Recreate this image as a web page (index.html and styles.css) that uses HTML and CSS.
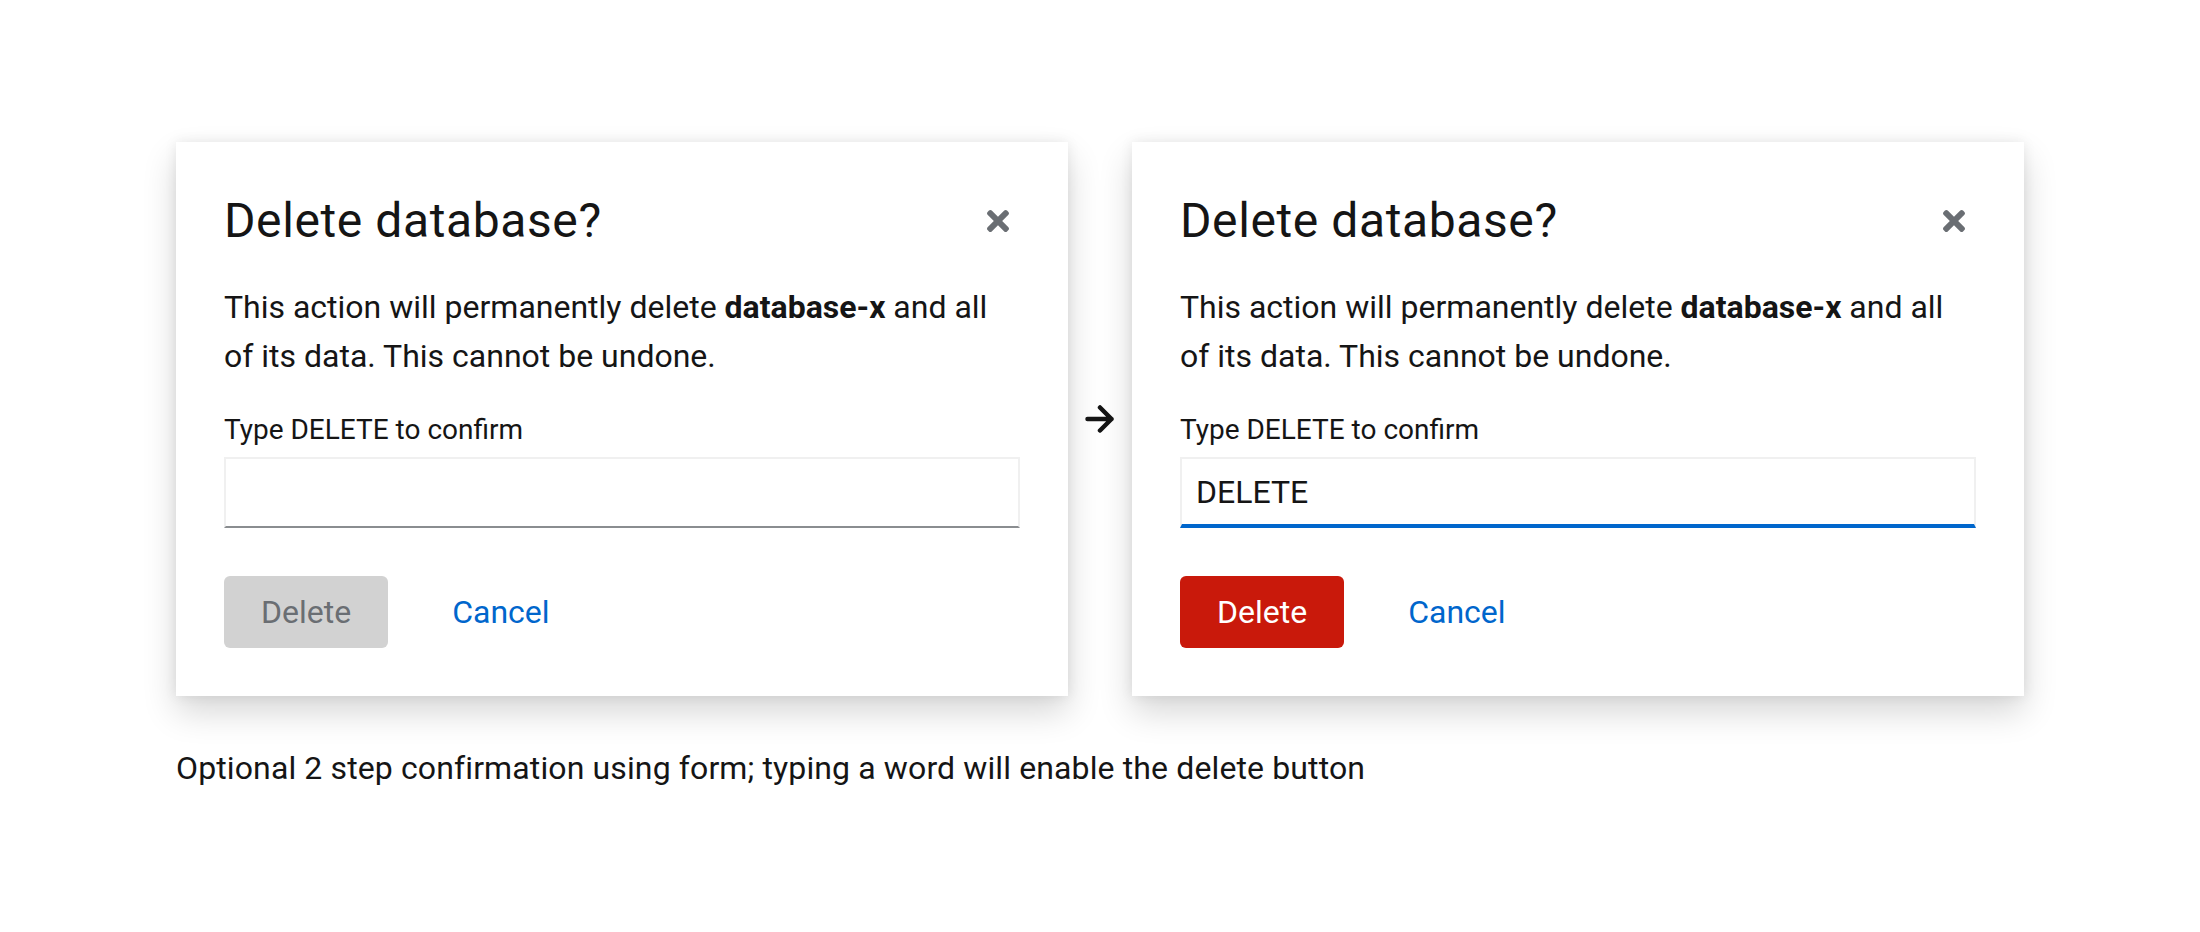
FILE: index.html
```html
<!DOCTYPE html>
<html lang="en">
<head>
<meta charset="utf-8">
<title>Delete database confirmation</title>
<link rel="stylesheet" href="styles.css">
</head>
<body>
<main class="page">
  <div class="row">
    <section class="modal">
      <header class="modal-header">
        <h1 class="modal-title">Delete database?</h1>
        <button class="close" aria-label="Close">
          <svg class="close-icon" viewBox="0 0 352 512" width="22" height="32" aria-hidden="true"><path fill="currentColor" d="M242.72 256l100.07-100.07c12.28-12.28 12.28-32.19 0-44.48l-22.24-22.24c-12.28-12.28-32.19-12.28-44.48 0L176 189.28 75.93 89.21c-12.28-12.28-32.19-12.28-44.48 0L9.21 111.45c-12.28 12.28-12.28 32.19 0 44.48L109.28 256 9.21 356.07c-12.28 12.28-12.28 32.19 0 44.48l22.24 22.24c12.28 12.28 32.2 12.28 44.48 0L176 322.72l100.07 100.07c12.28 12.28 32.2 12.28 44.48 0l22.24-22.24c12.28-12.28 12.28-32.19 0-44.48L242.72 256z"/></svg>
        </button>
      </header>
      <p class="modal-body">This action will permanently delete <b>database-x</b> and all of its data. This cannot be undone.</p>
      <label class="label" for="c1">Type DELETE to confirm</label>
      <input class="input" id="c1" type="text" value="">
      <div class="actions">
        <button class="btn btn-disabled" disabled>Delete</button>
        <button class="btn btn-link">Cancel</button>
      </div>
    </section>
    <div class="arrow">
      <svg viewBox="0 0 30 28" width="30" height="28" aria-hidden="true"><path d="M2.5 14H26.5M15 2.5L26.5 14L15 25.5" fill="none" stroke="#151515" stroke-width="4.5" stroke-linecap="round" stroke-linejoin="round"/></svg>
    </div>
    <section class="modal">
      <header class="modal-header">
        <h1 class="modal-title">Delete database?</h1>
        <button class="close" aria-label="Close">
          <svg class="close-icon" viewBox="0 0 352 512" width="22" height="32" aria-hidden="true"><path fill="currentColor" d="M242.72 256l100.07-100.07c12.28-12.28 12.28-32.19 0-44.48l-22.24-22.24c-12.28-12.28-32.19-12.28-44.48 0L176 189.28 75.93 89.21c-12.28-12.28-32.19-12.28-44.48 0L9.21 111.45c-12.28 12.28-12.28 32.19 0 44.48L109.28 256 9.21 356.07c-12.28 12.28-12.28 32.19 0 44.48l22.24 22.24c12.28 12.28 32.2 12.28 44.48 0L176 322.72l100.07 100.07c12.28 12.28 32.2 12.28 44.48 0l22.24-22.24c12.28-12.28 12.28-32.19 0-44.48L242.72 256z"/></svg>
        </button>
      </header>
      <p class="modal-body">This action will permanently delete <b>database-x</b> and all of its data. This cannot be undone.</p>
      <label class="label" for="c2">Type DELETE to confirm</label>
      <input class="input input-focus" id="c2" type="text" value="DELETE">
      <div class="actions">
        <button class="btn btn-danger">Delete</button>
        <button class="btn btn-link">Cancel</button>
      </div>
    </section>
  </div>
  <p class="caption">Optional 2 step confirmation using form; typing a word will enable the delete button</p>
</main>
</body>
</html>
```

FILE: styles.css
```css
html, body {
  margin: 0;
  padding: 0;
  background: #ffffff;
}

body {
  font-family: Roboto, "Liberation Sans", sans-serif;
  color: #151515;
}

.page {
  padding: 142px 0 0 176px;
}

.row {
  display: flex;
  align-items: stretch;
}

.modal {
  width: 892px;
  box-sizing: border-box;
  padding: 48px;
  background: #ffffff;
  box-shadow: 0 16px 32px 0 rgba(3, 3, 3, 0.16), 0 0 12px 0 rgba(3, 3, 3, 0.08);
  display: flex;
  flex-direction: column;
}

.modal-header {
  display: flex;
  justify-content: space-between;
  align-items: center;
  height: 62px;
}

.modal-title {
  margin: 0;
  font-size: 48px;
  line-height: 62px;
  letter-spacing: 0.6px;
  font-weight: 400;
  color: #151515;
}

.close {
  border: 0;
  background: none;
  padding: 0;
  margin-right: 11px;
  color: #6a6e73;
  display: flex;
}

.modal-body {
  margin: 31px 0 0 0;
  font-size: 32px;
  line-height: 49px;
}

.modal-body b {
  font-weight: 700;
}

.label {
  display: block;
  margin-top: 31px;
  font-size: 28px;
  line-height: 36px;
  margin-bottom: 9px;
}

.input {
  box-sizing: border-box;
  width: 100%;
  height: 71px;
  margin: 0;
  padding: 0 14px;
  border: 2px solid #f0f0f0;
  border-bottom: 2px solid #8a8d90;
  font-family: Roboto, "Liberation Sans", sans-serif;
  font-size: 32px;
  color: #151515;
  background: #ffffff;
  outline: none;
}

.input-focus {
  border-bottom: 4px solid #0066cc;
}

.actions {
  display: flex;
  margin-top: 48px;
}

.btn {
  font-family: Roboto, "Liberation Sans", sans-serif;
  font-size: 32px;
  line-height: 48px;
  padding: 12px 37px;
  border: 0;
  border-radius: 6px;
  background: none;
}

.btn-disabled {
  background: #d2d2d2;
  color: #6a6e73;
}

.btn-danger {
  background: #c9190b;
  color: #ffffff;
}

.btn-link {
  color: #0066cc;
  margin-left: 27px;
}

.arrow {
  width: 64px;
  display: flex;
  justify-content: center;
  align-items: center;
}

.caption {
  margin: 48px 0 0 0;
  font-size: 32px;
  line-height: 48px;
  letter-spacing: 0.12px;
}
```
